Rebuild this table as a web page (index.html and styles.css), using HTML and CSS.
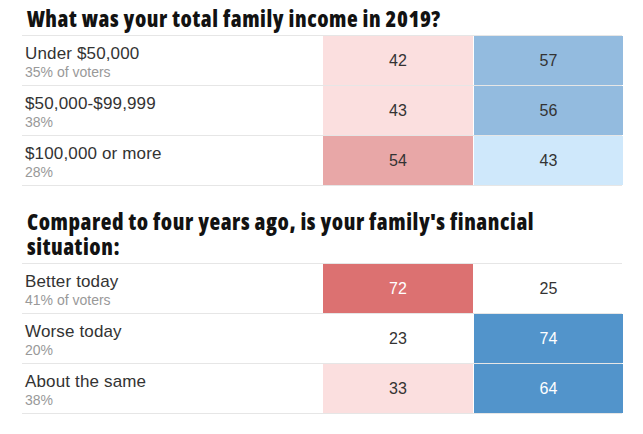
FILE: index.html
```html
<!DOCTYPE html>
<html lang="en">
<head>
<meta charset="utf-8">
<title>Exit poll</title>
<link rel="stylesheet" href="styles.css">
</head>
<body>
<main class="page">
  <section class="poll">
    <h2 class="poll-title">What was your total family income in 2019?</h2>
    <div class="poll-table">
      <div class="poll-row">
        <div class="label"><span class="answer">Under $50,000</span><span class="share">35% of voters</span></div>
        <div class="cell rep-1">42</div>
        <div class="cell dem-2">57</div>
      </div>
      <div class="poll-row">
        <div class="label"><span class="answer">$50,000-$99,999</span><span class="share">38%</span></div>
        <div class="cell rep-1">43</div>
        <div class="cell dem-2">56</div>
      </div>
      <div class="poll-row">
        <div class="label"><span class="answer">$100,000 or more</span><span class="share">28%</span></div>
        <div class="cell rep-2">54</div>
        <div class="cell dem-1">43</div>
      </div>
    </div>
  </section>
  <section class="poll">
    <h2 class="poll-title">Compared to four years ago, is your family's financial situation:</h2>
    <div class="poll-table">
      <div class="poll-row">
        <div class="label"><span class="answer">Better today</span><span class="share">41% of voters</span></div>
        <div class="cell rep-3">72</div>
        <div class="cell">25</div>
      </div>
      <div class="poll-row">
        <div class="label"><span class="answer">Worse today</span><span class="share">20%</span></div>
        <div class="cell">23</div>
        <div class="cell dem-3">74</div>
      </div>
      <div class="poll-row">
        <div class="label"><span class="answer">About the same</span><span class="share">38%</span></div>
        <div class="cell rep-1">33</div>
        <div class="cell dem-3">64</div>
      </div>
    </div>
  </section>
</main>
</body>
</html>
```

FILE: styles.css
```css
* { box-sizing: border-box; }

body {
  margin: 0;
  background: #fff;
  color: #333;
  font-family: "Liberation Sans", Arial, sans-serif;
}

.page {
  padding: 6px 0 0 22px;
  width: 622px;
}

.poll + .poll {
  margin-top: 23px;
}

.poll-title {
  margin: 0 0 4px 5px;
  max-width: 540px;
  font-family: "Open Sans", sans-serif;
  font-stretch: condensed;
  font-weight: 800;
  font-size: 22px;
  line-height: 25px;
  letter-spacing: 0.55px;
  color: #121212;
}

.poll-table {
  width: 600px;
  border-top: 1px solid #e6e6e6;
  border-right: 1px solid #e6e6e6;
}

.poll-row {
  display: grid;
  grid-template-columns: 300px 150px 149px;
  column-gap: 1px;
  height: 50px;
  border-bottom: 1px solid #e6e6e6;
}

.label {
  display: flex;
  flex-direction: column;
  padding: 8px 0 0 3px;
}

.answer {
  font-size: 17px;
  line-height: 20px;
  letter-spacing: 0.15px;
  color: #333;
}

.share {
  font-size: 14px;
  line-height: 16px;
  color: #999;
}

.cell {
  display: flex;
  align-items: center;
  justify-content: center;
  font-size: 16px;
  color: #333;
  background: #fff;
}

.rep-1 { background: #fbdfdf; }
.rep-2 { background: #e8a7a7; }
.rep-3 { background: #dc7171; color: #fff; }
.dem-1 { background: #cfe8fb; }
.dem-2 { background: #93bbdf; }
.dem-3 { background: #5294cb; color: #fff; }
```
